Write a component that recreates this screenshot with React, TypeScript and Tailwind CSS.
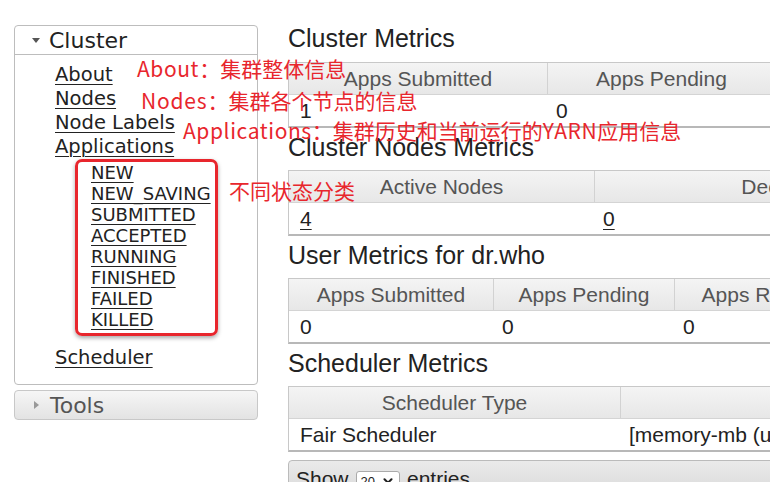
import React from 'react';
import { ChevronDown } from 'lucide-react';

type Cell = { head: string; value: string; w: string; link?: boolean };

const clusterMetrics: Cell[] = [
  { head: 'Apps Submitted', value: '1', w: 'w-[259px]' },
  { head: 'Apps Pending', value: '0', w: 'w-[228px]' },
  { head: 'Apps Running', value: '0', w: 'w-[220px]' },
];

const nodeMetrics: Cell[] = [
  { head: 'Active Nodes', value: '4', w: 'w-[306px]', link: true },
  { head: 'Decommissioning Nodes', value: '0', w: 'w-[526px]', link: true },
];

const userMetrics: Cell[] = [
  { head: 'Apps Submitted', value: '0', w: 'w-[205px]' },
  { head: 'Apps Pending', value: '0', w: 'w-[181px]' },
  { head: 'Apps Running', value: '0', w: 'w-[186px]' },
];

const schedulerMetrics: Cell[] = [
  { head: 'Scheduler Type', value: 'Fair Scheduler', w: 'w-[332px]' },
  { head: 'Scheduling Resource Type', value: '[memory-mb (unit=Mi), vcores]', w: 'w-[620px]' },
];

const states = ['NEW', 'NEW_SAVING', 'SUBMITTED', 'ACCEPTED', 'RUNNING', 'FINISHED', 'FAILED', 'KILLED'];

const linkCls = 'underline decoration-1 underline-offset-[3px]';

function MetricsTable({ cells }: { cells: Cell[] }) {
  return (
    <div className="w-max border border-[#c8c8c8] border-b-2 border-b-[#b8b8b8]">
      <div className="flex h-[32px] border-b border-[#d4d4d4] bg-gradient-to-b from-[#f4f4f4] to-[#e7e7e7]">
        {cells.map((c) => (
          <div
            key={c.head}
            className={`${c.w} shrink-0 border-r border-[#d2d2d2] text-center text-[21px] leading-[32px] text-[#555] whitespace-nowrap`}
          >
            {c.head}
          </div>
        ))}
      </div>
      <div className="flex h-[31px] bg-white">
        {cells.map((c, i) => (
          <div
            key={c.head}
            className={`${c.w} ${i === 0 ? 'pl-[11px]' : 'pl-[8px]'} shrink-0 text-[21px] leading-[31px] whitespace-nowrap`}
          >
            {c.link ? <span className={linkCls}>{c.value}</span> : c.value}
          </div>
        ))}
      </div>
    </div>
  );
}

function Heading({ children, first }: { children: React.ReactNode; first?: boolean }) {
  return (
    <h3 className={`${first ? 'mt-0 mb-[9px]' : 'mt-[4px] mb-[8px]'} h-[30px] text-[25px] leading-[30px] text-[#222]`}>
      {children}
    </h3>
  );
}

function Sidebar() {
  return (
    <aside className="ml-[14px] mt-[25px] w-[244px] shrink-0 font-['DejaVu_Sans',Verdana,sans-serif] text-[#222]">
      <div className="rounded-[4px] border border-[#bdbdbd] bg-white">
        <div className="flex h-[29px] items-center border-b border-[#bdbdbd] pl-[17px] text-[22px]">
          <span className="mr-[9px] h-0 w-0 border-x-[4px] border-t-[5px] border-x-transparent border-t-[#555]" />
          Cluster
        </div>
        <div className="pl-[40px] pt-[8px] pb-[14px] text-[19.5px] leading-[24px]">
          <div><span className={linkCls}>About</span></div>
          <div><span className={linkCls}>Nodes</span></div>
          <div><span className={linkCls}>Node Labels</span></div>
          <div><span className={linkCls}>Applications</span></div>
          <div className="ml-[20px] w-[143px] rounded-[7px] border-[3px] border-[#e8262d] pb-[3px] pl-[13px] text-[18px] leading-[21px] shadow-[0_2px_4px_rgba(0,0,0,0.35)]">
            {states.map((s) => (
              <div key={s} className="whitespace-nowrap">
                <span className={linkCls}>{s}</span>
              </div>
            ))}
          </div>
          <div className="mt-[10px]"><span className={linkCls}>Scheduler</span></div>
        </div>
      </div>
      <div className="mt-[5px] flex h-[30px] items-center rounded-[4px] border border-[#c8c8c8] bg-gradient-to-b from-[#f6f6f6] to-[#e3e3e3] pl-[19px] text-[22px] text-[#555]">
        <span className="mr-[11px] h-0 w-0 border-y-[4px] border-l-[5px] border-y-transparent border-l-[#999]" />
        Tools
      </div>
    </aside>
  );
}

export default function App() {
  return (
    <div className="relative h-[482px] w-[770px] overflow-hidden bg-white">
      <div className="flex items-start">
        <Sidebar />
        <main className="ml-[30px] mt-[23px] w-[1000px] shrink-0 font-['Liberation_Sans',Arial,sans-serif] text-[#222]">
          <Heading first>Cluster Metrics</Heading>
          <MetricsTable cells={clusterMetrics} />
          <Heading>Cluster Nodes Metrics</Heading>
          <MetricsTable cells={nodeMetrics} />
          <Heading>User Metrics for dr.who</Heading>
          <MetricsTable cells={userMetrics} />
          <Heading>Scheduler Metrics</Heading>
          <MetricsTable cells={schedulerMetrics} />
          <div className="mt-[8px] flex h-[40px] items-start rounded-t-[4px] border border-[#bbbbbb] bg-gradient-to-b from-[#eaeaea] to-[#d8d8d8] pl-[7px] pt-[6px] text-[21px] leading-[24px]">
            Show
            <span className="mx-[7px] mt-[4px] inline-flex h-[20px] items-center gap-[6px] rounded-[3px] border border-[#aaaaaa] bg-white px-[4px] text-[13px] leading-none">
              20
              <ChevronDown size={14} strokeWidth={3.5} />
            </span>
            entries
          </div>
        </main>
      </div>

      {/* red callouts laid over the menu */}
      <div className="pointer-events-none absolute inset-0 font-['Noto_Sans_CJK_SC',sans-serif] text-[21px] leading-[24px] text-[#e8262d] whitespace-nowrap">
        <div className="absolute left-[137px] top-[56px]">
          <span className="tracking-[0.6px]">About</span>：集群整体信息
        </div>
        <div className="absolute left-[141px] top-[88px]">
          <span className="tracking-[0.8px]">Nodes</span>：集群各个节点的信息
        </div>
        <div className="absolute left-[183px] top-[118px]">
          <span className="tracking-[0.6px]">Applications</span>：集群历史和当前运行的<span className="tracking-[0.6px]">YARN</span>应用信息
        </div>
        <div className="absolute left-[229px] top-[178px]">不同状态分类</div>
      </div>
    </div>
  );
}
